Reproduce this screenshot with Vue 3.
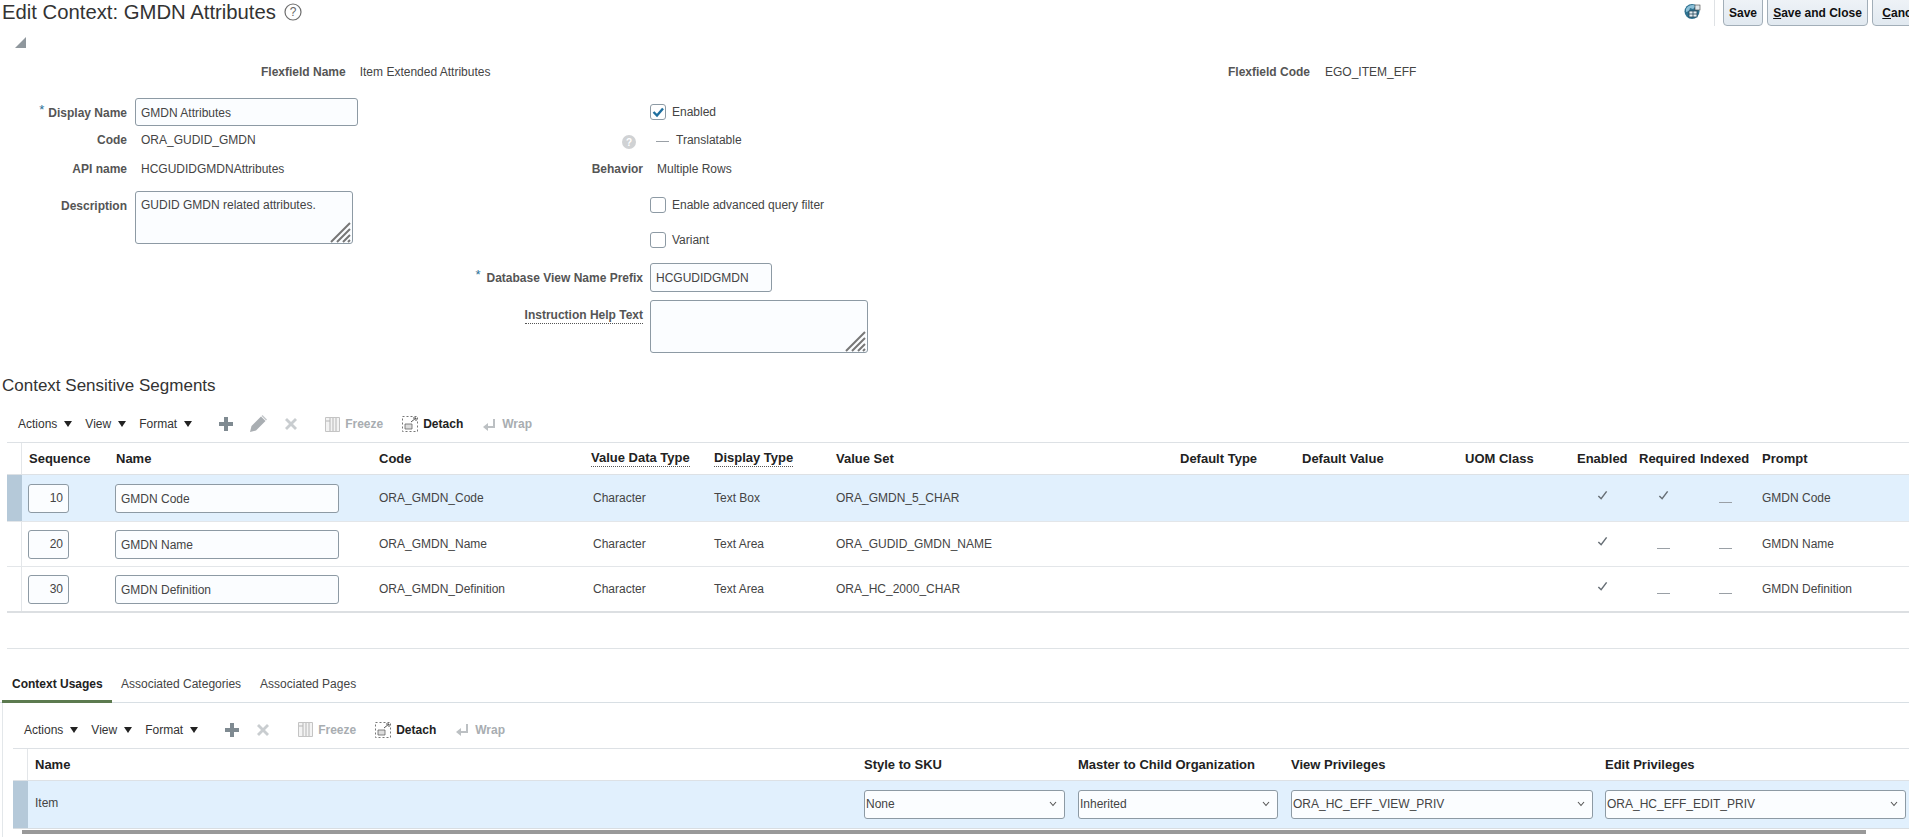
<script setup>
const segColumns = [
  { label: 'Sequence' }, { label: 'Name' }, { label: 'Code' },
  { label: 'Value Data Type', dotted: true }, { label: 'Display Type', dotted: true },
  { label: 'Value Set' }, { label: 'Default Type' }, { label: 'Default Value' },
  { label: 'UOM Class' }, { label: 'Enabled' }, { label: 'Required' }, { label: 'Indexed' }, { label: 'Prompt' },
]
const segRows = [
  { seq: 10, name: 'GMDN Code', code: 'ORA_GMDN_Code', type: 'Character', display: 'Text Box', set: 'ORA_GMDN_5_CHAR', enabled: true, required: true, prompt: 'GMDN Code', selected: true, h: 'h47' },
  { seq: 20, name: 'GMDN Name', code: 'ORA_GMDN_Name', type: 'Character', display: 'Text Area', set: 'ORA_GUDID_GMDN_NAME', enabled: true, required: false, prompt: 'GMDN Name', h: 'h45' },
  { seq: 30, name: 'GMDN Definition', code: 'ORA_GMDN_Definition', type: 'Character', display: 'Text Area', set: 'ORA_HC_2000_CHAR', enabled: true, required: false, prompt: 'GMDN Definition', h: 'h46' },
]
const usageSelects = [
  { label: 'Style to SKU', value: 'None', cls: 'w201' },
  { label: 'Master to Child Organization', value: 'Inherited', cls: 'w200' },
  { label: 'View Privileges', value: 'ORA_HC_EFF_VIEW_PRIV', cls: 'w302' },
  { label: 'Edit Privileges', value: 'ORA_HC_EFF_EDIT_PRIV', cls: 'w301' },
]
</script>

<template>
  <div class="page">
    <header class="top">
      <div class="title-wrap">
        <h1 class="title">Edit Context: GMDN Attributes</h1>
        <svg class="help" width="18" height="18" viewBox="0 0 18 18">
          <circle cx="9" cy="9" r="8" fill="none" stroke="#6d6d6d" stroke-width="1.2" />
          <text x="9" y="13" text-anchor="middle" font-size="12" font-family="Liberation Sans" fill="#666">?</text>
        </svg>
      </div>
      <div class="actions">
        <svg class="globe" width="17" height="17" viewBox="0 0 17 17">
          <circle cx="8" cy="8.5" r="7.5" fill="#2f7290" />
          <path d="M2 6C4 2 9 1 12 3L9 6 6 5 5 8 2 9Z" fill="#8cc0d8" />
          <rect x="5" y="8" width="8" height="6" fill="#e8eef2" stroke="#23465a" stroke-width=".8" />
          <path d="M9 8v6M5 11h8" stroke="#23465a" stroke-width=".8" />
          <rect x="11" y="2" width="5" height="5" fill="#dfe6ea" stroke="#444" stroke-width=".6" />
        </svg>
        <span class="sep"></span>
        <button class="btn w40">Save</button>
        <button class="btn w101"><u>S</u>ave and Close</button>
        <button class="btn w60"><u>C</u>ancel</button>
      </div>
    </header>

    <svg class="collapse" width="11" height="11" viewBox="0 0 11 11"><path d="M11 0V11H0Z" fill="#8f979d" /></svg>

    <div class="flex-row">
      <div class="pair pair-name"><span class="label">Flexfield Name</span><span class="val">Item Extended Attributes</span></div>
      <div class="pair pair-code"><span class="label">Flexfield Code</span><span class="val">EGO_ITEM_EFF</span></div>
    </div>

    <div class="form">
      <div class="col col-left">
        <div class="row h28">
          <span class="label lw-left"><i class="star">*</i>Display Name</span>
          <div class="input in-display">GMDN Attributes</div>
        </div>
        <div class="row h29 lift"><span class="label lw-left">Code</span><span class="val v-left">ORA_GUDID_GMDN</span></div>
        <div class="row h29 lift"><span class="label lw-left">API name</span><span class="val v-left">HCGUDIDGMDNAttributes</span></div>
        <div class="row top-row mt7">
          <span class="label lw-left pt8">Description</span>
          <div class="input area in-desc">
            GUDID GMDN related attributes.
            <svg class="grip" width="22" height="22" viewBox="0 0 22 22"><path d="M1 21 20 2M7 21 20 8M13 21 20 14M18 21l2-2" stroke="#777" stroke-width="2" fill="none" /></svg>
          </div>
        </div>
      </div>

      <div class="col col-right">
        <div class="row h28">
          <span class="label lw-right"></span>
          <span class="box"><svg width="14" height="14" viewBox="0 0 14 14"><path d="M2.5 7 6 10.500 12 3.500" fill="none" stroke="#1f6f9f" stroke-width="2.400" /></svg></span>
          <span class="val cb-text">Enabled</span>
        </div>
        <div class="row h29 lift">
          <span class="label lw-right help-cell">
            <svg width="14" height="14" viewBox="0 0 14 14"><circle cx="7" cy="7" r="7" fill="#d0d2d4" /><text x="7" y="11" text-anchor="middle" font-size="10" font-weight="700" font-family="Liberation Sans" fill="#fff">?</text></svg>
          </span>
          <span class="dash form-dash"></span>
          <span class="val">Translatable</span>
        </div>
        <div class="row h29 lift"><span class="label lw-right">Behavior</span><span class="val v-right">Multiple Rows</span></div>
        <div class="row h28 mt7">
          <span class="label lw-right"></span><span class="box"></span><span class="val cb-text">Enable advanced query filter</span>
        </div>
        <div class="row h28 mt7">
          <span class="label lw-right"></span><span class="box"></span><span class="val cb-text">Variant</span>
        </div>
        <div class="row h29 mt9">
          <span class="label lw-right"><i class="star star-far">*</i>Database View Name Prefix</span>
          <div class="input in-prefix">HCGUDIDGMDN</div>
        </div>
        <div class="row top-row mt8">
          <span class="label lw-right pt8"><span class="dotted">Instruction Help Text</span></span>
          <div class="input area in-help">
            <svg class="grip" width="22" height="22" viewBox="0 0 22 22"><path d="M1 21 20 2M7 21 20 8M13 21 20 14M18 21l2-2" stroke="#777" stroke-width="2" fill="none" /></svg>
          </div>
        </div>
      </div>
    </div>

    <h2 class="section">Context Sensitive Segments</h2>

    <div class="toolbar tb-seg">
      <span class="menu">Actions<i class="tri"></i></span>
      <span class="menu">View<i class="tri"></i></span>
      <span class="menu">Format<i class="tri"></i></span>
      <svg class="tool first" width="16" height="16" viewBox="0 0 16 16"><path d="M6 1h4v5h5v4h-5v5H6v-5H1V6h5Z" fill="#7f8a91" /></svg>
      <svg class="tool" width="18" height="18" viewBox="0 0 18 18"><path d="M1 17l1.500-6L12 1.500 16.500 6 7 15.500Z" fill="#a9aeb2" /><path d="M13.500 0 18 4.500 17 5.500 12.500 1Z" fill="#c4c8cb" /></svg>
      <svg class="tool tool-x" width="16" height="16" viewBox="0 0 16 16"><path d="M2 4 4 2l4 4 4-4 2 2-4 4 4 4-2 2-4-4-4 4-2-2 4-4Z" fill="#c9cdd0" /></svg>
      <svg class="tool ml-freeze" width="15" height="15" viewBox="0 0 15 15"><path d="M.5.500h14v14H.5Z" fill="#f3f3f3" stroke="#c4c4c4" /><path d="M5 1v13M8 1v13M11 1v13M1 4h4" stroke="#b5b5b5" /></svg>
      <span class="tool-text off">Freeze</span>
      <svg class="tool ml-detach" width="16" height="16" viewBox="0 0 16 16"><path d="M.5.500h15v15H.5Z" fill="none" stroke="#777" stroke-dasharray="2 2" /><path d="M3 8h7v5H3Z" fill="#ddd" stroke="#666" stroke-width=".8" /><path d="M9 6l5-4M11 2h3v3" stroke="#555" fill="none" /></svg>
      <span class="tool-text on">Detach</span>
      <svg class="tool ml-wrap" width="13" height="13" viewBox="0 0 13 13"><path d="M10 1v7H5V5L0 9l5 4v-3h7V1Z" fill="#bcc0c3" /></svg>
      <span class="tool-text off">Wrap</span>
    </div>

    <div class="seg-table">
      <div class="seg-grid seg-head">
        <div class="rowhead"></div>
        <div v-for="c in segColumns" :key="c.label" class="th"><span :class="{ dotted: c.dotted }">{{ c.label }}</span></div>
      </div>
      <div v-for="r in segRows" :key="r.seq" class="seg-grid seg-row" :class="[r.h, { selected: r.selected }]">
        <div class="rowhead"></div>
        <div class="td pad6"><div class="input seq">{{ r.seq }}</div></div>
        <div class="td pad6"><div class="input name">{{ r.name }}</div></div>
        <div class="td">{{ r.code }}</div>
        <div class="td type-cell">{{ r.type }}</div>
        <div class="td">{{ r.display }}</div>
        <div class="td">{{ r.set }}</div>
        <div class="td"></div>
        <div class="td"></div>
        <div class="td"></div>
        <div class="td center"><svg class="check" width="11" height="11" viewBox="0 0 12 12"><path d="M1.500 6.500 4.500 9.500 10.500 1.500" fill="none" stroke="#666e75" stroke-width="1.600" /></svg></div>
        <div class="td center">
          <svg v-if="r.required" class="check" width="11" height="11" viewBox="0 0 12 12"><path d="M1.500 6.500 4.500 9.500 10.500 1.500" fill="none" stroke="#666e75" stroke-width="1.600" /></svg>
          <span v-else class="dash cell-dash"></span>
        </div>
        <div class="td center"><span class="dash cell-dash"></span></div>
        <div class="td">{{ r.prompt }}</div>
      </div>
    </div>

    <div class="divider"></div>

    <nav class="tabs">
      <span class="tab active">Context Usages</span>
      <span class="tab">Associated Categories</span>
      <span class="tab">Associated Pages</span>
    </nav>

    <section class="panel">
      <div class="toolbar tb-usage">
        <span class="menu">Actions<i class="tri"></i></span>
        <span class="menu">View<i class="tri"></i></span>
        <span class="menu">Format<i class="tri"></i></span>
        <svg class="tool first" width="16" height="16" viewBox="0 0 16 16"><path d="M6 1h4v5h5v4h-5v5H6v-5H1V6h5Z" fill="#7f8a91" /></svg>
        <svg class="tool tool-x" width="16" height="16" viewBox="0 0 16 16"><path d="M2 4 4 2l4 4 4-4 2 2-4 4 4 4-2 2-4-4-4 4-2-2 4-4Z" fill="#c9cdd0" /></svg>
        <svg class="tool ml-freeze" width="15" height="15" viewBox="0 0 15 15"><path d="M.5.500h14v14H.5Z" fill="#f3f3f3" stroke="#c4c4c4" /><path d="M5 1v13M8 1v13M11 1v13M1 4h4" stroke="#b5b5b5" /></svg>
        <span class="tool-text off">Freeze</span>
        <svg class="tool ml-detach" width="16" height="16" viewBox="0 0 16 16"><path d="M.5.500h15v15H.5Z" fill="none" stroke="#777" stroke-dasharray="2 2" /><path d="M3 8h7v5H3Z" fill="#ddd" stroke="#666" stroke-width=".8" /><path d="M9 6l5-4M11 2h3v3" stroke="#555" fill="none" /></svg>
        <span class="tool-text on">Detach</span>
        <svg class="tool ml-wrap" width="13" height="13" viewBox="0 0 13 13"><path d="M10 1v7H5V5L0 9l5 4v-3h7V1Z" fill="#bcc0c3" /></svg>
        <span class="tool-text off">Wrap</span>
      </div>
      <div class="use-table">
        <div class="use-grid use-head">
          <div class="rowhead"></div>
          <div class="th">Name</div>
          <div v-for="s in usageSelects" :key="s.label" class="th th6">{{ s.label }}</div>
        </div>
        <div class="use-grid use-row selected">
          <div class="rowhead"></div>
          <div class="td item-cell">Item</div>
          <div v-for="s in usageSelects" :key="s.label" class="td pad6">
            <div class="input select" :class="s.cls">
              {{ s.value }}
              <svg width="8" height="6" viewBox="0 0 8 6"><path d="M1 1l3 3.500L7 1" fill="none" stroke="#555" stroke-width="1.100" /></svg>
            </div>
          </div>
        </div>
      </div>
      <div class="scrollbar"></div>
    </section>
  </div>
</template>

<style>
html, body { margin: 0; overflow: hidden; background: #fff; }
</style>

<style scoped>
* { box-sizing: border-box; }
.page {
  width: 1909px; height: 837px; overflow: hidden; background: #fff;
  font-family: "Liberation Sans", Arial, sans-serif; font-size: 12px; color: #444;
}
.top { height: 26px; display: flex; justify-content: space-between; align-items: flex-end; overflow: hidden; }
.title-wrap { display: flex; align-items: center; height: 26px; padding: 0 0 3px 2px; }
.title { margin: 0; font-size: 20.3px; font-weight: 400; color: #333; line-height: 24px; }
.help { margin-left: 8px; }
.actions { display: flex; align-items: flex-end; height: 32px; flex: none; width: 225px; }
.globe { flex: none; margin: 0 13px 6px 0; }
.sep { width: 1px; height: 26px; background: #dfe2e5; margin-right: 8px; flex: none; }
.btn {
  height: 32px; flex: none; margin-right: 4px; padding: 5px 0 0; border: 1px solid #a2aeb8; border-radius: 4px;
  background: linear-gradient(#f0f4f8, #e1e9f0); font: 700 12px "Liberation Sans", Arial, sans-serif; color: #111;
  text-align: center; white-space: nowrap;
}
.w40 { width: 40px; } .w101 { width: 101px; } .w60 { width: 60px; }
.collapse { display: block; margin: 11px 0 0 15px; }
.flex-row { display: flex; height: 20px; margin-top: 14px; align-items: center; }
.pair { display: flex; align-items: center; }
.pair-name { width: 1228px; padding-left: 261px; }
.pair .label { margin-right: 14px; }
.pair-code .label { margin-right: 15px; }
.label { font-weight: 700; color: #555; text-align: right; white-space: nowrap; }
.val { color: #444; white-space: nowrap; }
.form { display: flex; margin-top: 16px; height: 255px; }
.col-left { width: 400px; flex: none; }
.col-right { flex: 1; }
.row { display: flex; align-items: center; }
.top-row { align-items: flex-start; }
.h28 { height: 28px; } .h29 { height: 29px; }
.lift { padding-bottom: 2px; }
.mt7 { margin-top: 7px; } .mt8 { margin-top: 8px; } .mt9 { margin-top: 9px; }
.pt8 { padding-top: 8px; }
.lw-left { width: 127px; margin-right: 8px; flex: none; }
.lw-right { width: 243px; margin-right: 7px; flex: none; }
.v-left { margin-left: 6px; }
.v-right { margin-left: 7px; }
.star { font-style: normal; color: #2a6f97; font-size: 13px; margin-right: 4px; position: relative; top: -3px; font-weight: 400; }
.star-far { margin-right: 6px; }
.dotted { border-bottom: 1px dotted #555; padding-bottom: 1px; }
.input {
  border: 1px solid #8d9aa4; border-radius: 3px; background: #fbfdff; color: #444;
  padding: 0 5px; display: flex; align-items: center; white-space: nowrap; flex: none;
}
.in-display { width: 223px; height: 28px; padding-top: 1px; }
.in-desc { width: 218px; height: 53px; }
.in-prefix { width: 122px; height: 29px; }
.in-help { width: 218px; height: 53px; }
.area { position: relative; align-items: flex-start; padding-top: 6px; }
.grip { position: absolute; right: 0; bottom: 0; }
.box {
  width: 16px; height: 16px; border: 1px solid #8d9aa4; border-radius: 3px; background: #fff; flex: none;
  display: flex; align-items: center; justify-content: center;
}
.cb-text { margin-left: 6px; }
.help-cell { padding-top: 4px; padding-right: 7px; display: flex; justify-content: flex-end; }
.dash { display: inline-block; width: 13px; height: 1px; background: #9aa0a6; }
.form-dash { margin: 4px 7px 0 6px; }
.section { margin: 23px 0 0 2px; font-size: 17px; font-weight: 400; line-height: 20px; color: #333; }
.toolbar { display: flex; align-items: center; height: 32px; color: #333; padding-bottom: 4px; }
.tb-seg { margin-top: 14px; padding-left: 18px; }
.tb-usage { height: 33px; padding-left: 11px; }
.menu { display: flex; align-items: center; margin-right: 13px; }
.tri { width: 0; height: 0; border-left: 4px solid transparent; border-right: 4px solid transparent; border-top: 6px solid #222; margin-left: 7px; }
.tool { flex: none; margin-right: 15px; }
.tool.first { margin-left: 13px; }
.tool-x { margin-right: 16px; }
.tb-seg .tool-x { margin-left: 1px; }
.tool.ml-freeze { margin-left: 10px; margin-right: 5px; }
.tool.ml-detach { margin-left: 19px; margin-right: 5px; }
.tool.ml-wrap { margin-left: 20px; margin-right: 6px; }
.tb-usage .tool.first { margin-left: 13px; }
.tb-usage .tool.ml-freeze { margin-left: 11px; }
.tool-text { font-weight: 700; }
.off { color: #a8adb1; }
.on { color: #222; }
.seg-table { margin-left: 7px; }
.seg-grid {
  display: grid; align-items: stretch;
  grid-template-columns: 15px 87px 263px 212px 123px 122px 344px 122px 163px 112px 62px 61px 62px 154px;
}
.seg-head { height: 33px; border-top: 1px solid #dde1e5; border-bottom: 1px solid #dde1e5; }
.seg-row { border-bottom: 1px solid #e3e6e9; }
.seg-row:last-child { border-bottom: 2px solid #dcdfe2; }
.h47 { height: 47px; } .h45 { height: 45px; } .h46 { height: 46px; }
.rowhead { border-right: 1px solid #e3e6e9; }
.selected { background: #e1f0fd; }
.selected .rowhead { background: #b5c9d9; border-right: 0; }
.th { font-weight: 700; font-size: 13px; color: #222; padding-left: 7px; display: flex; align-items: center; white-space: nowrap; }
.th6 { padding-left: 6px; }
.td { padding-left: 7px; display: flex; align-items: center; white-space: nowrap; color: #444; }
.td.pad6 { padding-left: 6px; }
.td.type-cell { padding-left: 9px; }
.td.center { padding-left: 2px; justify-content: center; }
.check { margin-bottom: 5px; }
.cell-dash { margin-top: 9px; }
.seq { width: 41px; height: 29px; justify-content: flex-end; padding-right: 5px; }
.name { width: 224px; height: 29px; padding-top: 1px; }
.divider { height: 1px; margin: 35px 0 0 7px; background: #dfe3e6; }
.tabs { display: flex; height: 33px; margin-top: 21px; padding-left: 2px; border-bottom: 1px solid #d8dfe4; }
.tab { height: 33px; padding: 7px 11px 0 10px; margin-right: -3px; color: #444; white-space: nowrap; }
.tab + .tab { padding-left: 12px; padding-right: 7px; margin-right: 0; }
.active { width: 110px; font-weight: 700; color: #222; border-bottom: 3px solid #5c7a4f; }
.panel { margin-left: 2px; padding: 12px 0 0 10px; border-left: 1px solid #e3e7ea; height: 134px; }
.use-grid { display: grid; grid-template-columns: 15px 830px 214px 213px 314px 310px; }
.use-head { height: 33px; border-top: 1px solid #dde1e5; border-bottom: 1px solid #dde1e5; }
.use-row { height: 48px; border-bottom: 1px solid #d8dde1; }
.item-cell { padding-bottom: 3px; }
.use-row .td.pad6 { align-items: flex-start; padding-top: 9px; }
.select { height: 29px; padding: 0 7px 2px 1px; justify-content: space-between; font-size: 12px; border-radius: 3px; }
.w201 { width: 201px; } .w200 { width: 200px; } .w302 { width: 302px; } .w301 { width: 301px; }
.scrollbar { width: 1844px; height: 4px; margin: 1px 0 0 9px; background: #999; }
</style>
